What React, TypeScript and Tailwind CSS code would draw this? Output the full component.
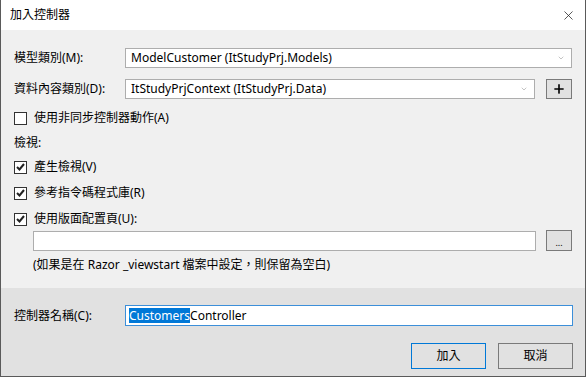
import { X, ChevronDown, Plus } from "lucide-react"

const font = "font-['Noto_Sans','Noto_Sans_CJK_TC',sans-serif]"

function Check({ checked }: { checked?: boolean }) {
  return (
    <span className="flex h-[13px] w-[13px] shrink-0 items-center justify-center border border-[#333] bg-white">
      {checked && (
        <svg width="9" height="8" viewBox="0 0 9 8">
          <path d="M1 4 L3.5 6.5 L8 1" fill="none" stroke="#222" strokeWidth="2" />
        </svg>
      )}
    </span>
  )
}

function Select({ value }: { value: string }) {
  return (
    <div className="flex h-[20px] flex-1 items-center justify-between border border-[#adadad] bg-white pl-[5px] pr-[6px]">
      <span className="leading-none">{value}</span>
      <ChevronDown size={8} strokeWidth={1.5} className="text-[#888]" />
    </div>
  )
}

function CheckRow({ label, checked, className }: { label: string; checked?: boolean; className?: string }) {
  return (
    <div className={"flex h-[16px] items-center gap-[7px] " + (className ?? "")}>
      <Check checked={checked} />
      <span className="leading-none">{label}</span>
    </div>
  )
}

export default function App() {
  return (
    <div className={`flex h-[377px] w-[586px] flex-col border-x border-b border-[#5a5a5a] text-[12px] text-black ${font}`}>
      {/* Title bar */}
      <div className="flex h-[30px] shrink-0 items-center justify-between bg-white pl-[9px] pr-[9px]">
        <span>加入控制器</span>
        <X size={15} strokeWidth={1.2} className="text-[#222]" />
      </div>

      {/* Main form */}
      <div className="flex flex-1 flex-col bg-[#f0f0f0] pl-[13px] pr-[13px] pt-[18px]">
        <div className="flex h-[20px] items-center">
          <span className="w-[111px] shrink-0">模型類別(M):</span>
          <Select value="ModelCustomer (ItStudyPrj.Models)" />
        </div>
        <div className="mt-[11px] flex h-[20px] items-center">
          <span className="w-[111px] shrink-0">資料內容類別(D):</span>
          <Select value="ItStudyPrjContext (ItStudyPrj.Data)" />
          <button className="ml-[11px] flex h-[20px] w-[26px] items-center justify-center border border-[#7a7a7a] bg-[#e1e1e1]">
            <Plus size={14} strokeWidth={2.8} />
          </button>
        </div>
        <CheckRow className="mt-[11px]" label="使用非同步控制器動作(A)" />
        <div className="mt-[9px] flex h-[16px] items-center">檢視:</div>
        <CheckRow className="mt-[8px]" checked label="產生檢視(V)" />
        <CheckRow className="mt-[10px]" checked label="參考指令碼程式庫(R)" />
        <CheckRow className="mt-[10px]" checked label="使用版面配置頁(U):" />
        <div className="mt-[3px] flex items-center pl-[19px]">
          <div className="h-[20px] flex-1 border border-[#adadad] bg-white" />
          <button className="ml-[10px] flex h-[21px] w-[26px] items-end justify-center border border-[#7a7a7a] bg-[#e1e1e1] pb-[3px] text-[9px] leading-none">
            ...
          </button>
        </div>
        <div className="mt-[6px] flex h-[16px] items-center pl-[19px]">
          (如果是在 Razor _viewstart 檔案中設定，則保留為空白)
        </div>
      </div>

      {/* Footer */}
      <div className="flex h-[88px] shrink-0 flex-col bg-[#e1e1e1] pl-[13px] pr-[12px] pt-[17px]">
        <div className="flex h-[21px] items-center">
          <span className="w-[111px] shrink-0">控制器名稱(C):</span>
          <div className="flex h-[21px] flex-1 items-center border border-[#3c8fd9] bg-white pl-[3px]">
            <span className="bg-[#0078d7] leading-[15px] text-white">Customers</span>
            <span className="leading-[15px]">Controller</span>
          </div>
        </div>
        <div className="mt-[17px] flex justify-end gap-[12px]">
          <button className="h-[26px] w-[75px] border border-[#0078d7] bg-[#e1e1e1]">加入</button>
          <button className="h-[26px] w-[75px] border border-[#7a7a7a] bg-[#e1e1e1]">取消</button>
        </div>
      </div>
    </div>
  )
}
